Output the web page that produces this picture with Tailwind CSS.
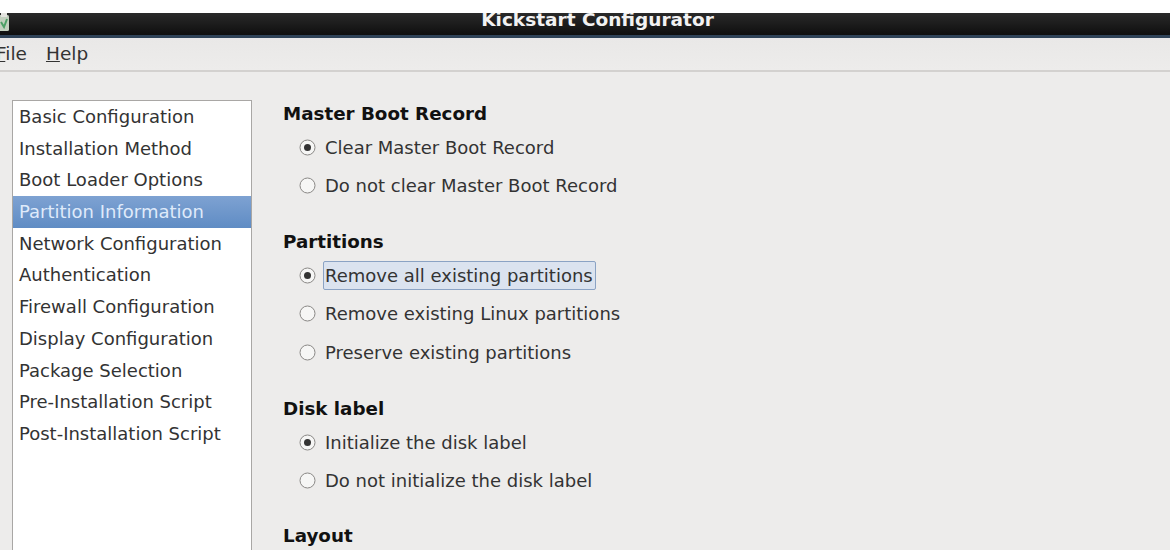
<!DOCTYPE html>
<html><head><meta charset="utf-8"><script src="https://cdn.jsdelivr.net/npm/@tailwindcss/browser@4"></script></head>
<body class="bg-white">
<div class="w-[1170px] h-[550px] overflow-hidden flex flex-col font-['DejaVu_Sans',sans-serif] text-[18px] text-[#333] bg-[#edeceb]">
  <div class="h-[13px] bg-white shrink-0"></div>
  <div class="relative h-[25px] shrink-0 overflow-hidden bg-gradient-to-b from-[#2a2a2a] to-[#0f0f0f] border-b-[3px] border-[#2f4358] flex justify-center">
    <svg class="absolute left-[-2px] top-[0px]" width="12" height="19" viewBox="0 0 12 19"><rect x="1" y="2" width="10" height="16" rx="1.5" fill="#c3d0bf"/><path d="M3 9l3 5 3-8" fill="none" stroke="#4da066" stroke-width="2"/><rect x="3" y="0" width="6" height="4" fill="#e4e4e0"/></svg>
    <span class="font-bold text-[#f2f2f2] text-[18.5px] leading-[14px] ml-[25px]">Kickstart Configurator</span>
  </div>
  <div class="h-[34px] shrink-0 bg-gradient-to-b from-[#e9e8e7] to-[#edeceb] border-b-2 border-[#d3d1cf] flex items-center gap-[19px] leading-none text-[18.5px]">
    <span class="ml-[-4px]"><span class="underline">F</span>ile</span>
    <span><span class="underline">H</span>elp</span>
  </div>
  <div class="flex flex-1 pt-[28px] pl-[12px] min-h-0">
    <div class="w-[240px] shrink-0 h-[500px] bg-white border border-[#a9a7a5] flex flex-col leading-[31.7px]">
      <div class="pl-[6px] h-[31.7px]">Basic Configuration</div>
      <div class="pl-[6px] h-[31.7px]">Installation Method</div>
      <div class="pl-[6px] h-[31.7px]">Boot Loader Options</div>
      <div class="pl-[6px] h-[31.7px] text-[#dfeafa] bg-gradient-to-b from-[#7ea2d2] to-[#5f8cc4]">Partition Information</div>
      <div class="pl-[6px] h-[31.7px]">Network Configuration</div>
      <div class="pl-[6px] h-[31.7px]">Authentication</div>
      <div class="pl-[6px] h-[31.7px]">Firewall Configuration</div>
      <div class="pl-[6px] h-[31.7px]">Display Configuration</div>
      <div class="pl-[6px] h-[31.7px]">Package Selection</div>
      <div class="pl-[6px] h-[31.7px]">Pre-Installation Script</div>
      <div class="pl-[6px] h-[31.7px]">Post-Installation Script</div>
    </div>
    <div class="pl-[31px] flex flex-col">
      <div class="font-bold text-[18.3px] text-[#111] h-[30px] leading-[28px]">Master Boot Record</div>
      <div class="flex flex-col">
        <div class="flex items-center h-[38.5px] pl-[16px] gap-[9px]"><svg width="17" height="17" viewBox="0 0 17 17"><circle cx="8.5" cy="8.5" r="7.5" fill="#f6f6f5" stroke="#8a8886"/><circle cx="8.5" cy="8.5" r="3.5" fill="#333"/></svg><span>Clear Master Boot Record</span></div>
        <div class="flex items-center h-[38.5px] pl-[16px] gap-[9px]"><svg width="17" height="17" viewBox="0 0 17 17"><circle cx="8.5" cy="8.5" r="7.5" fill="#f6f6f5" stroke="#8a8886"/></svg><span>Do not clear Master Boot Record</span></div>
      </div>
      <div class="font-bold text-[18.3px] text-[#111] h-[29px] leading-[28px] mt-[23px]">Partitions</div>
      <div class="flex flex-col">
        <div class="flex items-center h-[38.5px] pl-[16px] gap-[7px]"><svg width="17" height="17" viewBox="0 0 17 17"><circle cx="8.5" cy="8.5" r="7.5" fill="#f6f6f5" stroke="#8a8886"/><circle cx="8.5" cy="8.5" r="3.5" fill="#333"/></svg><span class="pl-[1px] pr-[2px] h-[29px] leading-[27px] bg-[#dbe3ef] border border-[#8ba3c4] rounded-[2px]">Remove all existing partitions</span></div>
        <div class="flex items-center h-[38.5px] pl-[16px] gap-[9px]"><svg width="17" height="17" viewBox="0 0 17 17"><circle cx="8.5" cy="8.5" r="7.5" fill="#f6f6f5" stroke="#8a8886"/></svg><span>Remove existing Linux partitions</span></div>
        <div class="flex items-center h-[38.5px] pl-[16px] gap-[9px]"><svg width="17" height="17" viewBox="0 0 17 17"><circle cx="8.5" cy="8.5" r="7.5" fill="#f6f6f5" stroke="#8a8886"/></svg><span>Preserve existing partitions</span></div>
      </div>
      <div class="font-bold text-[18.3px] text-[#111] h-[31px] leading-[28px] mt-[23px]">Disk label</div>
      <div class="flex flex-col">
        <div class="flex items-center h-[38.5px] pl-[16px] gap-[9px]"><svg width="17" height="17" viewBox="0 0 17 17"><circle cx="8.5" cy="8.5" r="7.5" fill="#f6f6f5" stroke="#8a8886"/><circle cx="8.5" cy="8.5" r="3.5" fill="#333"/></svg><span>Initialize the disk label</span></div>
        <div class="flex items-center h-[38.5px] pl-[16px] gap-[9px]"><svg width="17" height="17" viewBox="0 0 17 17"><circle cx="8.5" cy="8.5" r="7.5" fill="#f6f6f5" stroke="#8a8886"/></svg><span>Do not initialize the disk label</span></div>
      </div>
      <div class="font-bold text-[18.3px] text-[#111] h-[30px] leading-[28px] mt-[22px]">Layout</div>
    </div>
  </div>
</div>
</body></html>
